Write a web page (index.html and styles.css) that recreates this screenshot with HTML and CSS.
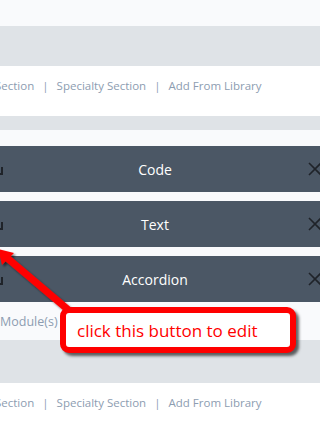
FILE: index.html
```html
<!DOCTYPE html>
<html>
<head>
<meta charset="utf-8">
<link rel="stylesheet" href="styles.css">
</head>
<body>
<div class="page">
  <div class="top-strip"></div>
  <div class="band band-tall"></div>
  <div class="links-row">
    <span class="link">Section</span><span class="sep">|</span><span class="link">Specialty Section</span><span class="sep">|</span><span class="link">Add From Library</span>
  </div>
  <div class="band band-short"></div>
  <div class="modules">
    <div class="module"><span class="corner"></span><span class="name">Code</span><svg class="close" viewBox="0 0 14 14"><path d="M1 1L13 13M13 1L1 13" stroke="#1f2329" stroke-width="1.6" fill="none"/></svg></div>
    <div class="module"><span class="corner"></span><span class="name">Text</span><svg class="close" viewBox="0 0 14 14"><path d="M1 1L13 13M13 1L1 13" stroke="#1f2329" stroke-width="1.6" fill="none"/></svg></div>
    <div class="module"><span class="corner"></span><span class="name">Accordion</span><svg class="close" viewBox="0 0 14 14"><path d="M1 1L13 13M13 1L1 13" stroke="#1f2329" stroke-width="1.6" fill="none"/></svg></div>
  </div>
  <div class="add-row"><span class="link">Module(s)</span></div>
  <div class="band band-mid"></div>
  <div class="links-row links-bottom">
    <span class="link">Section</span><span class="sep">|</span><span class="link">Specialty Section</span><span class="sep">|</span><span class="link">Add From Library</span>
  </div>
</div>
<svg class="arrow" width="80" height="70" viewBox="0 0 80 70">
  <defs>
    <filter id="sh" x="-20%" y="-20%" width="140%" height="140%">
      <feDropShadow dx="2" dy="2" stdDeviation="1.2" flood-color="#000" flood-opacity="0.55"/>
    </filter>
  </defs>
  <g filter="url(#sh)">
    <path d="M72 62L6 6" stroke="#ff0000" stroke-width="7" stroke-linecap="butt"/>
    <path d="M-2 -2L14 2L2 14Z" fill="#ff0000"/>
  </g>
</svg>
<div class="callout"><span>click this button to edit</span></div>
</body>
</html>
```
FILE: styles.css
```css
html, body {
  margin: 0;
  padding: 0;
}
body {
  background: #f9fafc;
  font-family: "Open Sans", "Segoe UI", sans-serif;
  overflow: hidden;
  width: 320px;
  height: 423px;
  position: relative;
}
.page {
  display: flex;
  flex-direction: column;
}
.top-strip {
  height: 26px;
}
.band {
  background: #dfe3e7;
}
.band-tall { height: 40px; }
.band-short { height: 14px; }
.band-mid { height: 43px; }
.links-row {
  background: #ffffff;
  height: 50px;
  box-sizing: border-box;
  padding-top: 10px;
  display: flex;
  align-items: flex-start;
  margin-left: -5px;
  font-size: 11.5px;
  line-height: 20px;
  color: #8d9db1;
  white-space: nowrap;
}
.links-bottom {
  height: 40px;
}
.sep {
  margin: 0 8px;
}
.modules {
  display: flex;
  flex-direction: column;
  gap: 9px;
  padding-top: 16px;
  margin-left: -20px;
  width: 350px;
}
.module {
  height: 46px;
  background: #4b5765;
  color: #ffffff;
  display: flex;
  align-items: center;
  justify-content: center;
  position: relative;
  font-size: 14px;
}
.corner {
  position: absolute;
  left: 17px;
  top: 21px;
  width: 6px;
  height: 8px;
  border-right: 2px solid #1f2329;
  border-bottom: 2px solid #1f2329;
  box-sizing: border-box;
}
.close {
  position: absolute;
  left: 328px;
  top: 16px;
  width: 14px;
  height: 14px;
}
.add-row {
  height: 38px;
  display: flex;
  align-items: center;
  font-size: 12.5px;
  color: #8d9db1;
}
.arrow {
  position: absolute;
  left: 0;
  top: 251px;
  overflow: visible;
}
.callout {
  position: absolute;
  left: 60px;
  top: 307px;
  width: 236px;
  height: 46px;
  box-sizing: border-box;
  border: 6px solid #ff0000;
  border-radius: 9px;
  background: #ffffff;
  box-shadow: 3px 3px 3px rgba(0,0,0,0.6);
  display: flex;
  align-items: center;
  padding-left: 11px;
  color: #ff0000;
  font-size: 17px;
}
```
